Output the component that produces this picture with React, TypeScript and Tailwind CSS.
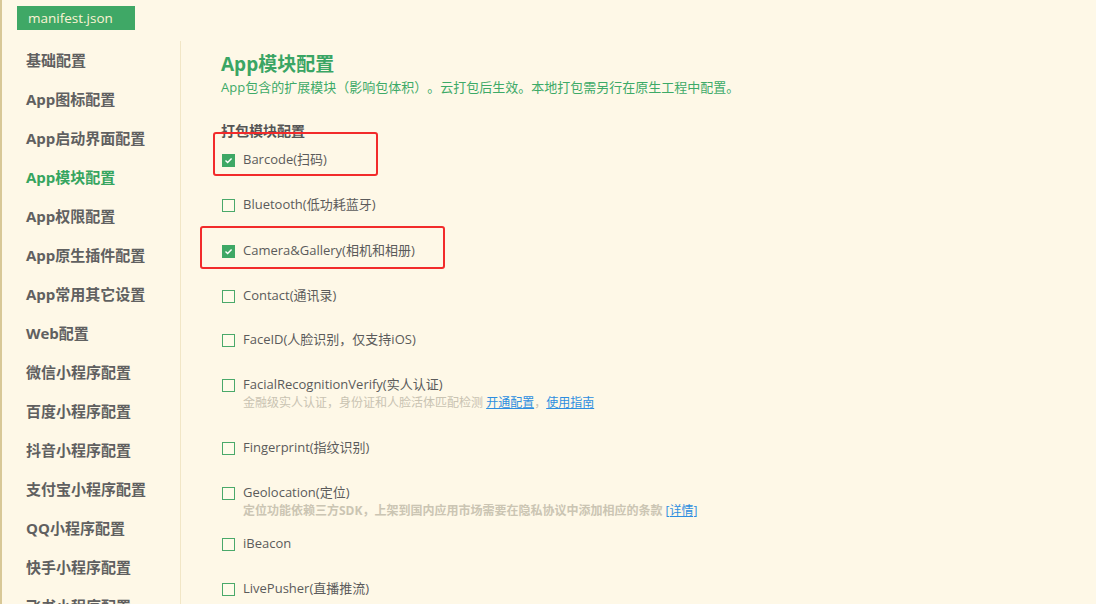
import React from "react";

const font = { fontFamily: '"Open Sans", "Noto Sans CJK SC", sans-serif' };

const navItems = [
  "基础配置",
  "App图标配置",
  "App启动界面配置",
  "App模块配置",
  "App权限配置",
  "App原生插件配置",
  "App常用其它设置",
  "Web配置",
  "微信小程序配置",
  "百度小程序配置",
  "抖音小程序配置",
  "支付宝小程序配置",
  "QQ小程序配置",
  "快手小程序配置",
  "飞书小程序配置",
];

function Checkbox({ checked }: { checked?: boolean }) {
  if (checked) {
    return (
      <span className="flex h-[13px] w-[13px] shrink-0 items-center justify-center bg-[#3ea865]">
        <svg width="9" height="9" viewBox="0 0 9 9">
          <path d="M1.5 4.6 L3.6 6.6 L7.6 2.4" fill="none" stroke="#fff" strokeWidth="1.4" />
        </svg>
      </span>
    );
  }
  return <span className="h-[13px] w-[13px] shrink-0 border border-[#4aa96a] bg-[#fffbea]" />;
}

function Row({ label, checked, className }: { label: string; checked?: boolean; className: string }) {
  return (
    <div className={"flex h-[20px] items-center gap-[8px] pl-[1px] text-[13px] text-[#5b5b5b] " + className}>
      <Checkbox checked={checked} />
      <span>{label}</span>
    </div>
  );
}

export default function App() {
  return (
    <div
      className="relative flex h-[604px] w-[1096px] flex-col overflow-hidden border-l-2 border-[#d8c897] bg-[#fef8e7] [text-spacing-trim:space-all]"
      style={font}
    >
      <div className="h-[41px] shrink-0 pl-[15px] pt-[6px]">
        <div className="flex h-[24px] w-[118px] items-center bg-[#3fa866] pl-[11px] text-[13.5px] text-[#fbf3d4]">
          manifest.json
        </div>
      </div>
      <div className="flex min-h-0 flex-1">
        <div className="w-[179px] shrink-0 border-r border-[#f1e6c6] pl-[24px]">
          {navItems.map((n) => (
            <div
              key={n}
              className={
                "flex h-[39px] items-center text-[15px] font-bold " +
                (n === "App模块配置" ? "text-[#36a55f]" : "text-[#606060]")
              }
            >
              {n}
            </div>
          ))}
        </div>
        <div className="flex-1 pl-[40px] pt-[10px]">
          <div className="h-[26px] text-[19px] font-bold leading-[26px] text-[#3aa564]">App模块配置</div>
          <div className="h-[20px] text-[13px] leading-[20px] text-[#3daa67]">
            App包含的扩展模块（影响包体积）。云打包后生效。本地打包需另行在原生工程中配置。
          </div>
          <div className="mt-[24px] h-[20px] text-[14px] font-bold leading-[20px] text-[#555]">打包模块配置</div>
          <Row label="Barcode(扫码)" checked className="mt-[9px]" />
          <Row label="Bluetooth(低功耗蓝牙)" className="mt-[25px]" />
          <Row label="Camera&Gallery(相机和相册)" checked className="mt-[26px]" />
          <Row label="Contact(通讯录)" className="mt-[25px]" />
          <Row label="FaceID(人脸识别，仅支持iOS)" className="mt-[24px]" />
          <Row label="FacialRecognitionVerify(实人认证)" className="mt-[25px]" />
          <div className="h-[16px] pl-[22px] text-[12px] leading-[16px] text-[#c9c3b2]">
            金融级实人认证，身份证和人脸活体匹配检测{" "}
            <span className="text-[#2d8ee0] underline">开通配置</span>，
            <span className="text-[#2d8ee0] underline">使用指南</span>
          </div>
          <Row label="Fingerprint(指纹识别)" className="mt-[27px]" />
          <Row label="Geolocation(定位)" className="mt-[25px]" />
          <div className="h-[16px] pl-[22px] text-[12px] font-bold leading-[16px] text-[#cbc5b3]">
            定位功能依赖三方SDK，上架到国内应用市场需要在隐私协议中添加相应的条款{" "}
            <span className="font-normal text-[#2d8ee0] underline">[详情]</span>
          </div>
          <Row label="iBeacon" className="mt-[15px]" />
          <Row label="LivePusher(直播推流)" className="mt-[25px]" />
        </div>
      </div>
      <div className="absolute left-[211px] top-[132px] h-[44px] w-[165px] rounded-[3px] border-2 border-[#f22b2b]" />
      <div className="absolute left-[198px] top-[226px] h-[43px] w-[245px] rounded-[3px] border-2 border-[#f22b2b]" />
    </div>
  );
}
